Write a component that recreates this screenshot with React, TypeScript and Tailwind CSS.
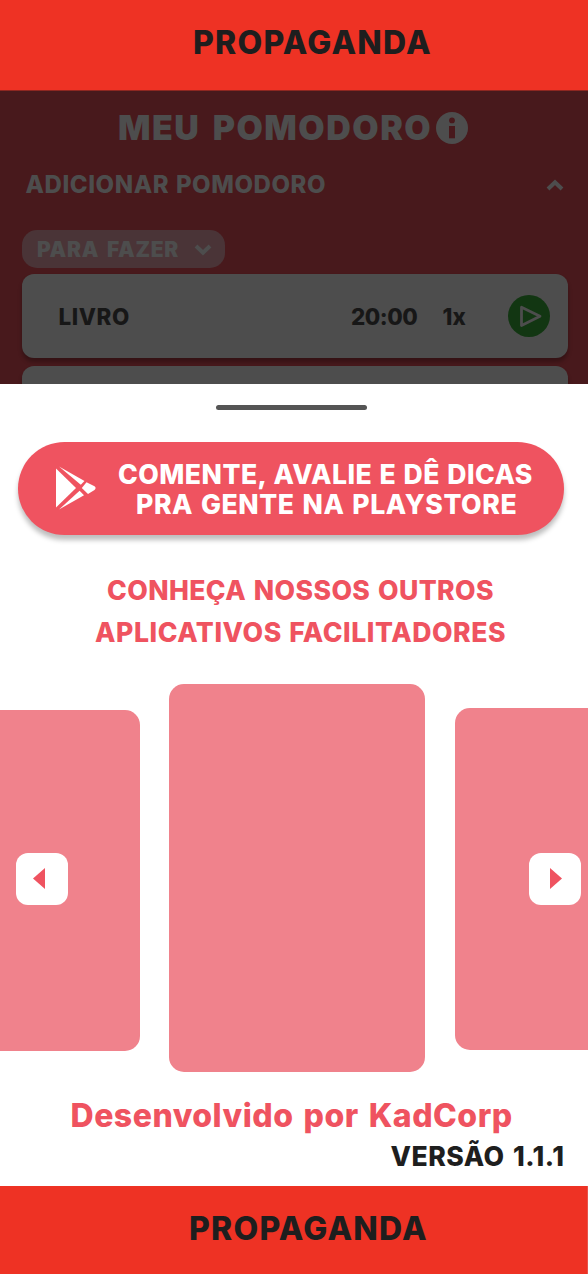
import type { ReactNode } from 'react';

function AdText({ className }: { className: string }) {
  return (
    <p className={`text-[32px] tracking-[1.25px] text-[#1e1e1e] ${className}`}>PROPAGANDA</p>
  );
}

function TaskCard({ children }: { children?: ReactNode }) {
  return (
    <div className="ml-[22px] flex h-[84.5px] w-[546px] shrink-0 items-center rounded-xl bg-[#4d4d4d] text-[22.4px] text-[#171717] shadow-[0_4px_4px_rgba(0,0,0,0.28)]">
      {children}
    </div>
  );
}

function Chevron({ up = false, className }: { up?: boolean; className: string }) {
  return (
    <svg viewBox="0 0 18 12" className={className} fill="none" stroke="#4d4d4d" strokeWidth="4">
      <path d={up ? 'M2 10 9 3.2 16 10' : 'M2 2 9 8.8 16 2'} />
    </svg>
  );
}

function Arrow({ left = false }: { left?: boolean }) {
  return (
    <button
      aria-label={left ? 'Anterior' : 'Próximo'}
      className="flex h-[51.5px] w-[51.5px] items-center rounded-[12px] bg-white"
    >
      <svg viewBox="0 0 12 21" className={left ? 'ml-[17px] h-[21px] w-3' : 'ml-[21px] h-[21px] w-3'}>
        <path d={left ? 'M12 0V21L0 10.5Z' : 'M0 0V21L12 10.5Z'} fill="#ef5360" />
      </svg>
    </button>
  );
}

export default function App() {
  return (
    <main className="flex h-[1274px] w-[588px] flex-col overflow-hidden whitespace-nowrap bg-white font-['Inter',sans-serif] font-extrabold [font-feature-settings:'calt'_0]">
      <header className="h-[91px] shrink-0 border-b border-[#8e2721] bg-[#ee3224]">
        <AdText className="pl-[193px] leading-[85px]" />
      </header>

      <section className="flex h-[293px] shrink-0 flex-col overflow-hidden bg-[#48191c] text-[#4d4d4d]">
        <div className="flex h-[73px] shrink-0 items-center pl-[118px]">
          <h1 className="w-[318px] text-[34px] font-black leading-[73px] tracking-[1.5px] [word-spacing:4px]">MEU POMODORO</h1>
          <svg viewBox="0 0 32 32" className="h-8 w-8">
            <circle cx="16" cy="16" r="16" fill="#4d4d4d" />
            <g fill="#48191c">
              <circle cx="16" cy="8.4" r="2.9" />
              <path d="M13 14h6v12.3h-6z" />
            </g>
          </svg>
        </div>
        <div className="flex h-[41px] shrink-0 items-center justify-between pl-[25.5px] pr-6">
          <h2 className="text-2xl leading-[41px] tracking-[0.55px] [word-spacing:1px]">ADICIONAR POMODORO</h2>
          <Chevron up className="h-3 w-[18px]" />
        </div>
        <div className="ml-[22px] mt-[25px] flex h-[37.5px] w-[203px] shrink-0 items-center rounded-[15px] bg-[#4a3437] pl-[15px]">
          <span className="w-[157px] pt-px text-[21px] font-black leading-[37px] tracking-[0.7px] [word-spacing:3px]">PARA FAZER</span>
          <Chevron className="mt-0.5 h-3 w-[18px]" />
        </div>
        <div className="mt-[6px] flex flex-col gap-[7.5px]">
          <TaskCard>
            <span className="ml-[36.5px] w-[292.5px] pt-0.5 tracking-[0.6px]">LIVRO</span>
            <span className="w-[91.5px] pt-0.5 tracking-[-0.5px]">20:00</span>
            <span className="w-[65.5px] pt-0.5">1x</span>
            <svg viewBox="0 0 42 42" className="h-[42px] w-[42px]">
              <circle cx="21" cy="21" r="21" fill="#123612" />
              <path d="M13.5 12.3V30.5L32 21.2Z" fill="none" stroke="#4d4d4d" strokeWidth="2.8" strokeLinejoin="round" />
            </svg>
          </TaskCard>
          <TaskCard />
        </div>
      </section>

      <section className="flex h-[802px] shrink-0 flex-col text-[#ef5360]">
        <div className="ml-[216px] mt-[21px] h-[5px] w-[151px] shrink-0 rounded-full bg-[#555]" />
        <button className="ml-[17.5px] mt-[31.5px] flex h-[93.5px] w-[546.5px] shrink-0 items-center rounded-full bg-[#ef5360] text-white shadow-[0_5px_5px_rgba(0,0,0,0.26)]">
          <svg viewBox="0 0 40 44" className="ml-[38.5px] h-11 w-10 shrink-0" fill="white">
            <path d="M0 2.5 20 22 0 41.5Z" />
            <path d="M3 0.5 28.5 15 24.8 18.8Z" />
            <path d="M3 43.5 28 29.3 23.6 24.8Z" />
            <path d="M30.5 16.2 38.5 20.3Q40.6 22 38.5 24L32 28 25.8 22Z" />
          </svg>
          <span className="flex flex-col pl-[22px] pt-0.5 text-left text-[26.6px] leading-[30.4px]">
            <span className="tracking-[0.48px] [word-spacing:1px]">COMENTE, AVALIE E DÊ DICAS</span>
            <span className="pl-[18px] tracking-[0.58px] [word-spacing:1.4px]">PRA GENTE NA PLAYSTORE</span>
          </span>
        </button>
        <h2 className="mt-[34px] text-[26.6px]">
          <span className="block pl-[107px] leading-[42px] tracking-[0.4px] [word-spacing:1.5px]">CONHEÇA NOSSOS OUTROS</span>
          <span className="block pl-[95px] leading-[43.5px] tracking-[0.57px] [word-spacing:1px]">APLICATIVOS FACILITADORES</span>
        </h2>
        <div className="mt-[29px] flex h-[389px] shrink-0">
          <div className="mt-[26px] flex h-[341.5px] w-[140px] shrink-0 items-center rounded-r-[15px] bg-[#f0828c] pb-[3px] pl-4">
            <Arrow left />
          </div>
          <div className="ml-[29px] h-[388.5px] w-[255.5px] shrink-0 rounded-[15px] bg-[#f0828c]" />
          <div className="ml-[30.5px] mt-[24.5px] flex h-[341.5px] w-[133px] shrink-0 items-center rounded-l-[15px] bg-[#f0828c] pl-[74px]">
            <Arrow />
          </div>
        </div>
        <p className="mt-[20px] pl-[70.5px] text-[32px] leading-[46px] tracking-[0.5px] [word-spacing:2.5px]">Desenvolvido por KadCorp</p>
        <p className="-mt-px pl-[390.5px] text-[26.6px] leading-[36px] tracking-[0.5px] text-[#1e1e1e] [word-spacing:2px]">VERSÃO 1.1.1</p>
      </section>

      <footer className="h-[88px] shrink-0 border-r border-[#e8524a] bg-[#ee3224]">
        <AdText className="pl-[189px] leading-[85px]" />
      </footer>
    </main>
  );
}
